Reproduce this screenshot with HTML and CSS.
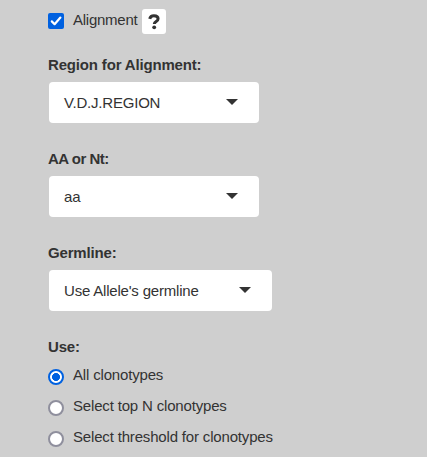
FILE: index.html
```html
<!DOCTYPE html>
<html lang="en">
<head>
<meta charset="utf-8">
<title>Alignment options</title>
<link rel="stylesheet" href="styles.css">
</head>
<body>
<form class="panel">
  <div class="toggle">
    <svg class="checkbox" viewBox="0 0 16 16"><rect width="16" height="16" rx="2" fill="#0061e0"/><path d="M3.8 8.4 6.6 11.2 12.4 4.6" fill="none" stroke="#fff" stroke-width="2.2" stroke-linecap="round" stroke-linejoin="round"/></svg>
    <span class="toggle-label">Alignment</span>
    <span class="help"><svg width="12" height="16" viewBox="0 0 12 16"><path d="M1.7 4.8C2.2 2.7 3.7 1.7 5.9 1.7c2.5 0 4.2 1.1 4.2 3 0 3-3.8 2.5-3.8 5.3" fill="none" stroke="#333" stroke-width="3"/><circle cx="6.2" cy="13.3" r="1.9" fill="#333"/></svg></span>
  </div>
  <div class="field">
    <div class="label">Region for Alignment:</div>
    <div class="select"><span>V.D.J.REGION</span><i class="caret"></i></div>
  </div>
  <div class="field">
    <div class="label tight">AA or Nt:</div>
    <div class="select"><span>aa</span><i class="caret"></i></div>
  </div>
  <div class="field">
    <div class="label">Germline:</div>
    <div class="select wide"><span>Use Allele's germline</span><i class="caret"></i></div>
  </div>
  <div class="label">Use:</div>
  <div class="options">
    <div class="option"><i class="radio checked"></i><span>All clonotypes</span></div>
    <div class="option"><i class="radio"></i><span>Select top N clonotypes</span></div>
    <div class="option"><i class="radio"></i><span>Select threshold for clonotypes</span></div>
  </div>
</form>
</body>
</html>
```
FILE: styles.css
```css
* { box-sizing: border-box; }
body {
  margin: 0;
  height: 457px;
  overflow: hidden;
  background: #cfcfcf;
  color: #333;
  font: 15px/21px "Liberation Sans", Arial, sans-serif;
  letter-spacing: -0.17px;
}
.panel { padding: 9px 0 0 48px; }
.toggle { display: flex; height: 25px; margin-bottom: 20px; }
.checkbox { width: 16px; height: 16px; margin-top: 4px; }
.toggle-label { margin-left: 9px; width: 69px; letter-spacing: -0.25px; }
.help {
  display: flex;
  align-items: center;
  justify-content: center;
  width: 24px;
  height: 25px;
  border-radius: 3px;
  background: #fff;
}
.label { height: 21px; font-weight: bold; }
.tight { letter-spacing: -0.5px; }
.field { height: 94px; }
.select {
  display: flex;
  align-items: center;
  justify-content: space-between;
  width: 210px;
  height: 41px;
  margin: 7px 0 0 1px;
  padding: 0 21px 1px 15px;
  border-radius: 4px;
  background: #fff;
  letter-spacing: -0.2px;
}
.wide { width: 223px; }
.caret {
  margin-top: -1px;
  border: 6px solid transparent;
  border-top-color: #333;
  border-bottom: 0;
}
.options { padding-top: 7px; }
.option { display: flex; height: 31px; }
.radio {
  width: 16px;
  height: 16px;
  margin: 5px 9px 0 0;
  border: 2px solid #8f8f9d;
  border-radius: 50%;
  background: #fff;
}
.checked {
  border-color: #0061e0;
  background: radial-gradient(circle, #0061e0 3.7px, #fff 4.3px);
}
```
